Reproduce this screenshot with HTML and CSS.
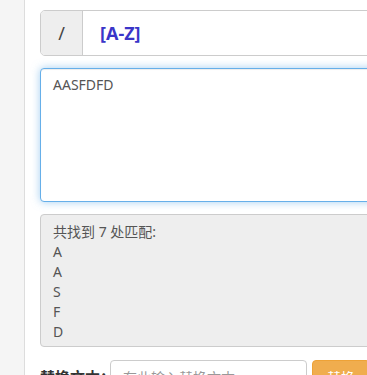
FILE: index.html
```html
<!DOCTYPE html>
<html lang="zh-CN">
<head>
    <meta charset="UTF-8">
    <meta name="viewport" content="width=device-width, initial-scale=1.0">
    <title>正则表达式测试</title>
    <link rel="stylesheet" href="styles.css">
</head>
<body>
    <div class="page">
        <div class="sidebar"></div>

        <div class="main">
            <div class="regex-group">
                <span class="addon">/</span>
                <input type="text" class="regex-input" value="[A-Z]">
            </div>

            <textarea class="source-text">AASFDFD</textarea>

            <div class="result">
                <div>共找到 7 处匹配:</div>
                <div>A</div>
                <div>A</div>
                <div>S</div>
                <div>F</div>
                <div>D</div>
                <div>F</div>
                <div>D</div>
            </div>

            <div class="replace-row">
                <label class="replace-label">替换文本：</label>
                <input type="text" class="replace-input" placeholder="在此输入替换文本">
                <button class="btn-replace">替换</button>
            </div>
        </div>
    </div>
</body>
</html>
```

FILE: styles.css
```css
:root {
    --border: #ccc;
    --text: #555;
    --focus: #66afe9;
    --warning: #f0ad4e;
}

body {
    margin: 0;
    padding: 0;
    font-family: 'Noto Sans', 'Noto Sans CJK SC', sans-serif;
    font-size: 14px;
    line-height: 20px;
    color: var(--text);
    background: #fff;
    overflow: hidden;
}

.page {
    display: flex;
    min-height: 375px;
}

.sidebar {
    width: 24px;
    flex-shrink: 0;
    background: #f5f5f5;
    border-right: 1px solid #ddd;
}

.main {
    width: 400px;
    flex-shrink: 0;
    padding: 10px 0 0 15px;
}

.regex-group {
    display: flex;
    height: 46px;
    box-sizing: border-box;
    border: 1px solid var(--border);
    border-radius: 5px;
    overflow: hidden;
}

.addon {
    width: 41px;
    background: #eee;
    border-right: 1px solid var(--border);
    display: flex;
    align-items: center;
    justify-content: center;
    font-size: 18px;
    color: #444;
}

.regex-input {
    flex: 1;
    border: none;
    outline: none;
    padding: 0 17px;
    font-family: 'Open Sans', 'Noto Sans', sans-serif;
    font-size: 18px;
    font-weight: bold;
    color: #3a35c8;
}

.source-text {
    display: block;
    width: 100%;
    height: 134px;
    box-sizing: border-box;
    margin-top: 12px;
    padding: 6px 12px;
    border: 1px solid var(--focus);
    border-radius: 4px;
    box-shadow: inset 0 1px 1px rgba(0,0,0,0.075), 0 0 8px rgba(102,175,233,0.6);
    outline: none;
    resize: none;
    font-family: inherit;
    font-size: 14px;
    line-height: 20px;
    color: var(--text);
}

.result {
    margin-top: 12px;
    height: 133px;
    box-sizing: border-box;
    padding: 7px 12px;
    background: #eee;
    border: 1px solid var(--border);
    border-radius: 4px;
    overflow: hidden;
}

.replace-row {
    display: flex;
    align-items: flex-start;
    gap: 5px;
    margin-top: 13px;
}

.replace-label {
    width: 70px;
    margin-right: -5px;
    flex-shrink: 0;
    white-space: nowrap;
    font-weight: bold;
    font-size: 15px;
    color: #333;
    padding-top: 7px;
}

.replace-input {
    width: 197px;
    height: 34px;
    flex-shrink: 0;
    box-sizing: border-box;
    padding: 6px 12px;
    border: 1px solid var(--border);
    border-radius: 4px;
    font-family: inherit;
    font-size: 14px;
    outline: none;
}

.replace-input::placeholder {
    color: #999;
}

.btn-replace {
    height: 34px;
    flex-shrink: 0;
    padding: 6px 14px;
    background: var(--warning);
    border: 1px solid #eea236;
    border-radius: 4px;
    color: white;
    font-family: inherit;
    font-size: 14px;
}
```
